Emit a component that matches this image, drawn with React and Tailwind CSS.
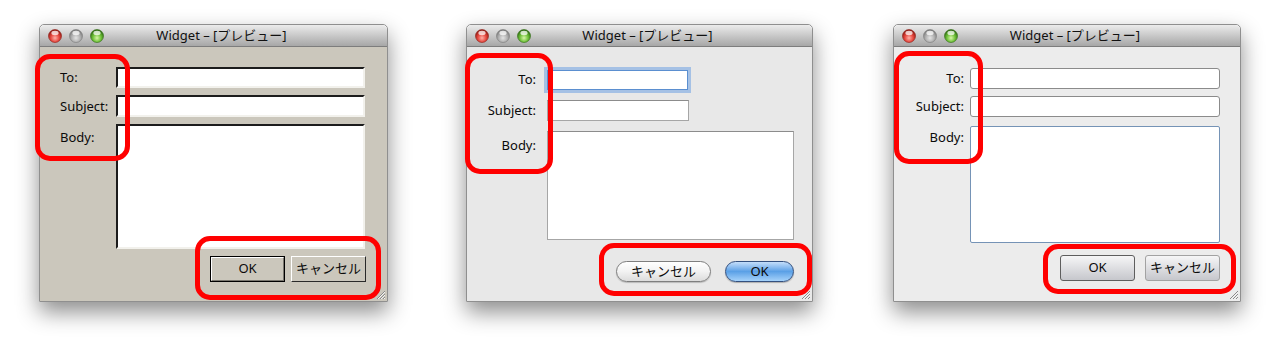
import React from 'react'

const font = { fontFamily: '"Noto Sans", "Noto Sans CJK JP", sans-serif' }

function Light({ id, from, mid, to }) {
  return (
    <svg width="14" height="14" viewBox="0 0 14 14">
      <defs>
        <radialGradient id={id} cx="50%" cy="65%" r="60%">
          <stop offset="0%" stopColor={from} />
          <stop offset="55%" stopColor={mid} />
          <stop offset="100%" stopColor={to} />
        </radialGradient>
      </defs>
      <circle cx="7" cy="7" r="6.5" fill={`url(#${id})`} stroke={to} strokeWidth="0.6" />
      <ellipse cx="7" cy="4" rx="3.6" ry="2.2" fill="#fff" opacity="0.75" />
    </svg>
  )
}

function TitleBar({ prefix }) {
  return (
    <div className="relative flex h-[22px] items-center rounded-t-[5px] border-b border-[#7d7d7d] bg-gradient-to-b from-[#ececec] to-[#a7a7a7] px-2">
      <div className="flex gap-[7px]">
        <Light id={`${prefix}r`} from="#ffb0a8" mid="#e5453c" to="#8e1b14" />
        <Light id={`${prefix}g`} from="#e4e4e4" mid="#b2b2b2" to="#7b7b7b" />
        <Light id={`${prefix}v`} from="#d8f7a8" mid="#6cbf36" to="#2f6b13" />
      </div>
      <div className="absolute inset-0 flex items-center justify-center pl-4 text-[13px] text-[#111]">
        Widget – [プレビュー]
      </div>
    </div>
  )
}

function Grip() {
  return (
    <svg className="absolute bottom-[1px] right-[1px]" width="11" height="11" viewBox="0 0 11 11">
      <path d="M10 2 L2 10 M10 5 L5 10 M10 8 L8 10" stroke="#8a8a8a" strokeWidth="1" />
      <path d="M10 3 L3 10 M10 6 L6 10 M10 9 L9 10" stroke="#f4f4f4" strokeWidth="1" />
    </svg>
  )
}

function Mark({ className }) {
  return <div className={`absolute rounded-[15px] border-[5px] border-[#ff0000] ${className}`} />
}

function Window({ prefix, width, bg, children, marks }) {
  return (
    <div
      className={`relative shrink-0 rounded-t-[5px] border border-[#8f8f8f] shadow-[0_10px_22px_rgba(0,0,0,0.45)] ${width}`}
    >
      <TitleBar prefix={prefix} />
      <div className={`relative h-[254px] ${bg}`}>
        {children}
        <Grip />
      </div>
      {marks}
    </div>
  )
}

function ClassicWindow() {
  const sunken =
    'border-2 border-t-[#1c1c1c] border-l-[#1c1c1c] border-b-[#f2f1ec] border-r-[#f2f1ec] bg-white'
  return (
    <Window
      prefix="a"
      width="w-[349px]"
      bg="bg-[#cbc7bc]"
      marks={
        <>
          <Mark className="left-[-5px] top-[29px] h-[107px] w-[95px]" />
          <Mark className="left-[155px] top-[211px] h-[64px] w-[186px]" />
        </>
      }
    >
      <div className="grid grid-cols-[56px_249px] gap-y-[7px] pl-[20px] pt-[20px] text-[13px] text-[#0a0a0a]">
        <div className="flex h-[21px] items-center pt-[1px]">To:</div>
        <div className={`h-[21px] ${sunken}`} />
        <div className="flex h-[22px] items-center pt-[1px]">Subject:</div>
        <div className={`h-[22px] ${sunken}`} />
        <div className="pt-[4px]">Body:</div>
        <div className={`h-[125px] ${sunken}`} />
      </div>
      <div className="mt-[7px] flex justify-end gap-[6px] pr-[21px]">
        <button className="flex h-[26px] w-[75px] items-center justify-center border border-black text-[13px] text-[#0a0a0a]">
          <span className="flex h-full w-full items-center justify-center border border-t-white border-l-white border-b-[#7a776f] border-r-[#7a776f]">
            OK
          </span>
        </button>
        <button className="flex h-[26px] w-[75px] items-center justify-center border border-t-white border-l-white border-b-[#2a2a2a] border-r-[#2a2a2a] text-[13px] text-[#0a0a0a]">
          キャンセル
        </button>
      </div>
    </Window>
  )
}

function AquaWindow() {
  return (
    <Window
      prefix="b"
      width="w-[347px]"
      bg="bg-[#e8e8e8]"
      marks={
        <>
          <Mark className="left-[-2px] top-[28px] h-[121px] w-[88px]" />
          <Mark className="left-[132px] top-[218px] h-[53px] w-[213px]" />
        </>
      }
    >
      <div className="grid grid-cols-[80px_247px] gap-y-[10px] pt-[23px] text-[13px] text-[#0a0a0a]">
        <div className="flex h-[20px] items-center justify-end pr-[11px]">To:</div>
        <div className="h-[20px] w-[141px] border border-[#5b8fd0] bg-white shadow-[0_0_0_3px_rgba(110,160,225,0.55)]" />
        <div className="flex h-[21px] items-center justify-end pr-[11px]">Subject:</div>
        <div className="h-[21px] w-[142px] border border-[#a6a6a6] border-t-[#8c8c8c] bg-white" />
        <div className="pr-[11px] pt-[5px] text-right">Body:</div>
        <div className="h-[109px] border border-[#a6a6a6] border-t-[#8c8c8c] bg-white" />
      </div>
      <div className="mt-[21px] flex justify-end gap-[14px] pr-[18px]">
        <button className="flex h-[21px] w-[95px] items-center justify-center rounded-full border border-[#7e7e7e] bg-gradient-to-b from-white via-[#f2f2f2] to-[#dcdcdc] text-[13px] text-[#0a0a0a] shadow-[0_1px_1px_rgba(0,0,0,0.2)]">
          キャンセル
        </button>
        <button className="flex h-[21px] w-[69px] items-center justify-center rounded-full border border-[#33507f] bg-gradient-to-b from-[#c4defa] via-[#5aa0e6] to-[#a5d2fa] text-[13px] text-[#0a0a0a] shadow-[0_1px_1px_rgba(0,0,0,0.25)]">
          OK
        </button>
      </div>
    </Window>
  )
}

function PlainWindow() {
  const field = 'rounded-[3px] border border-[#8b8b8b] bg-white'
  const btn =
    'flex h-[26px] w-[75px] items-center justify-center rounded-[3px] bg-gradient-to-b from-[#f6f6f7] to-[#c6c7cc] text-[13px] text-[#0a0a0a]'
  return (
    <Window
      prefix="c"
      width="w-[348px]"
      bg="bg-[#ececec]"
      marks={
        <>
          <Mark className="left-[0px] top-[26px] h-[113px] w-[89px]" />
          <Mark className="left-[149px] top-[219px] h-[50px] w-[193px]" />
        </>
      }
    >
      <div className="grid grid-cols-[76px_250px] gap-y-[7px] pt-[21px] text-[13px] text-[#0a0a0a]">
        <div className="flex h-[21px] items-center justify-end pr-[6px] pt-[1px]">To:</div>
        <div className={`h-[21px] ${field}`} />
        <div className="flex h-[21px] items-center justify-end pr-[6px] pt-[1px]">Subject:</div>
        <div className={`h-[21px] ${field}`} />
        <div className="pr-[6px] pt-[4px] text-right">Body:</div>
        <div className="mt-[2px] h-[117px] rounded-[2px] border border-[#7593b6] bg-white" />
      </div>
      <div className="mt-[12px] flex justify-end gap-[10px] pr-[20px]">
        <button className={`${btn} border border-[#5e5e5e]`}>OK</button>
        <button className={`${btn} border border-[#a2a2a2]`}>キャンセル</button>
      </div>
    </Window>
  )
}

export default function App() {
  return (
    <div className="h-[356px] w-[1281px] bg-white pt-[24px]" style={font}>
      <div className="flex pl-[39px]">
        <ClassicWindow />
        <div className="w-[78px] shrink-0" />
        <AquaWindow />
        <div className="w-[80px] shrink-0" />
        <PlainWindow />
      </div>
    </div>
  )
}
